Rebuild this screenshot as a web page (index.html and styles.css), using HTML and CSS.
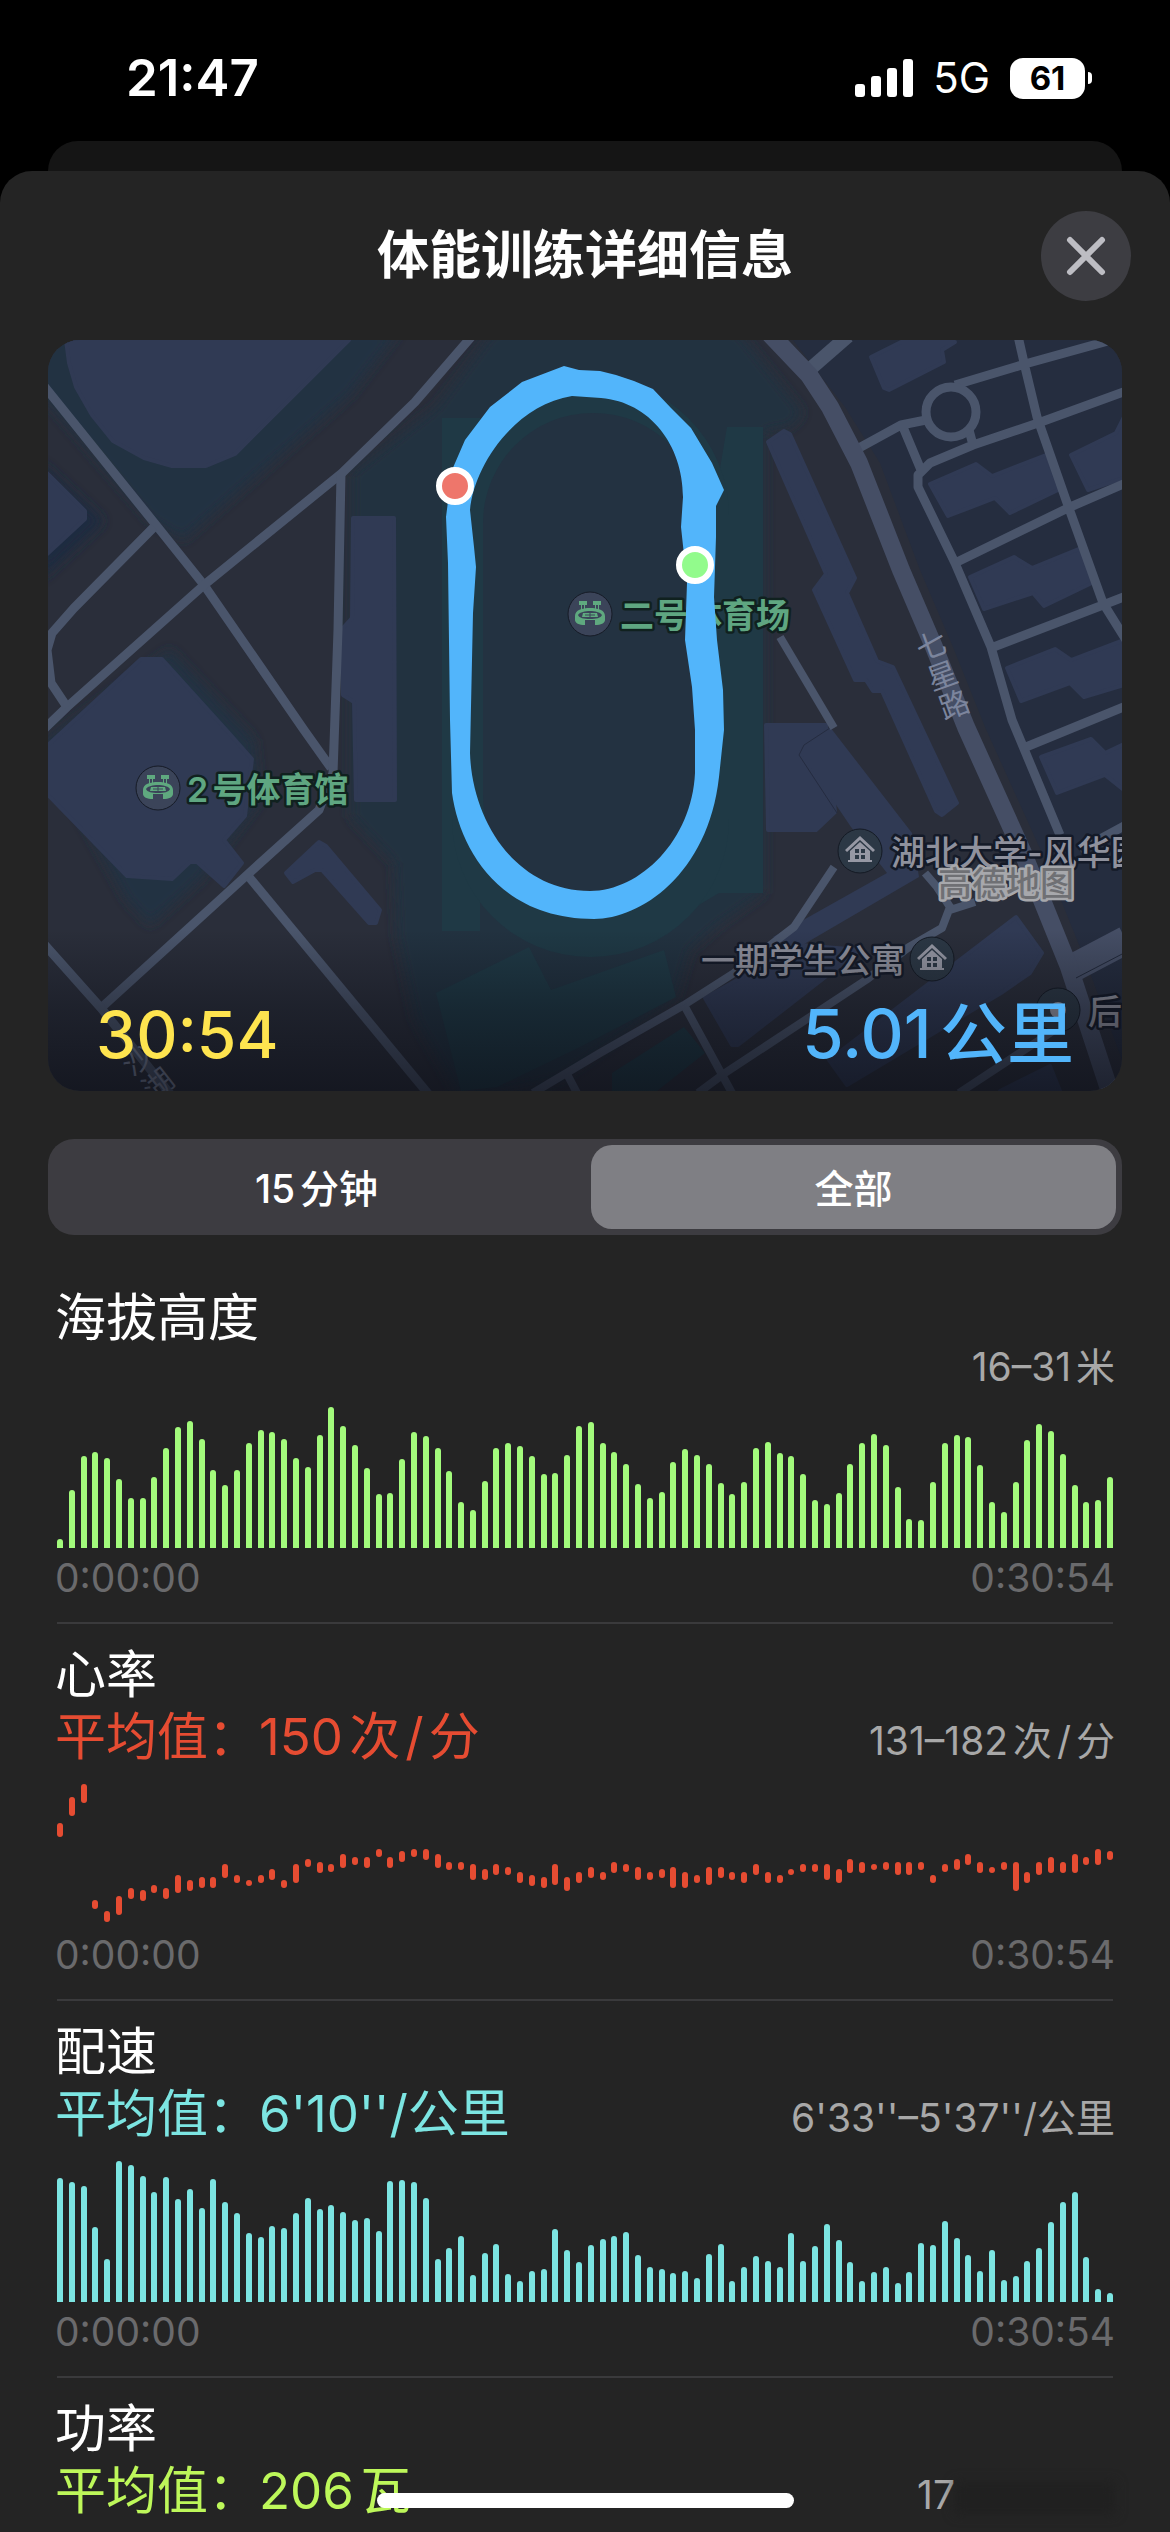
FILE: index.html
```html
<!DOCTYPE html>
<html lang="zh-CN">
<head>
<meta charset="utf-8">
<meta name="viewport" content="width=device-width, initial-scale=1">
<title>体能训练详细信息</title>
<link rel="stylesheet" href="styles.css">
</head>
<body>
<header class="status">
  <time class="status-time">21:47</time>
  <div class="status-right">
    <svg class="signal" viewBox="0 0 58 38" aria-hidden="true">
      <rect x="0" y="25" width="10" height="13" rx="3"/>
      <rect x="16" y="17" width="10" height="21" rx="3"/>
      <rect x="32" y="9" width="10" height="29" rx="3"/>
      <rect x="48" y="0" width="10" height="38" rx="3"/>
    </svg>
    <span class="network">5G</span>
    <span class="battery"><span class="battery-body">61</span><span class="battery-tip"></span></span>
  </div>
</header>
<div class="sheet-behind"></div>
<main class="sheet">
  <div class="titlebar">
    <h1 class="title">体能训练详细信息</h1>
    <button class="close" type="button" aria-label="关闭">
      <svg class="close-icon" viewBox="0 0 40 40" aria-hidden="true"><path d="M4 4 36 36M36 4 4 36"/></svg>
    </button>
  </div>

  <section class="map" aria-label="路线地图">
    <svg class="map-canvas" viewBox="48 340 1074 751">
      <defs>
        <linearGradient id="shade" x1="0" y1="0" x2="0" y2="1">
          <stop offset="0" stop-color="#0a0c14" stop-opacity="0"/>
          <stop offset=".5" stop-color="#0a0c14" stop-opacity=".38"/>
          <stop offset="1" stop-color="#0a0c14" stop-opacity=".66"/>
        </linearGradient>
        <filter id="soft" x="-10%" y="-10%" width="120%" height="120%"><feGaussianBlur stdDeviation="6"/></filter>
        <g id="stadium">
          <circle r="22" fill="#3b4459" stroke="#161b26" stroke-width="1"/>
          <g fill="#5fa97f">
            <path d="M-11-13h8v4h-8zM3-13h8v4H3zM-9-9h1v5h-1zM-6-9h1v5h-1zM5-9h1v5H5zM8-9h1v5H8z"/>
            <path fill-rule="evenodd" d="M-15 2C-15-4-8-6 0-6s15 2 15 8v4c0 3-4 5-10 5V6h-10v5c-6 0-10-2-10-5zM-12 1C-11 4-6 5 0 5s11-1 12-4C10-2 5-3 0-3s-10 1-12 4z"/>
            <path d="M-7-1h14l1 4H-8z"/>
          </g>
          <path d="M-5 1H5M0-1v4" stroke="#3b4459" stroke-width="1"/>
        </g>
        <g id="house">
          <circle r="22" fill="#2c3845" stroke="#141a24" stroke-width="1"/>
          <g fill="#9698a4">
            <path d="M0-15 15-1l-2 2L0-11-13 1l-2-2z"/>
            <path fill-rule="evenodd" d="M0-9 10 0v9h2v2h-24V9h2V0zM-5-2v4h4v-4zM1-2v4h4v-4zM-5 4v4h4V4zM1 4v4h4V4z"/>
          </g>
        </g>
      </defs>

      <rect x="48" y="340" width="1074" height="751" fill="#2a2e3a"/>
      <g filter="url(#soft)" fill="#233342">
        <path d="M30 330H400L350 395 183 540 150 520 40 392Z"/>
        <path d="M40 745 127 900 150 925 200 880 260 800 254 740 170 650Z"/>
        <path fill="#1f2c41" d="M40 462 104 521 40 580Z"/>
      </g>
      <path filter="url(#soft)" fill="#233241" d="M494 330H737L803 413 790 427 764 432V893L719 925 690 950 676 997 560 1080 461 1100 415 1020 397 937 394 863 351 817V473L436 407Z"/>
      <path fill="#252d3f" d="M793 340 820 375 845 407 880 463 920 570 953 647 985 727 1042 853 1088 967 1122 1060V340Z"/>

      <g fill="#1f3945">
        <path d="M442 418H480V931H442ZM727 427H763V893H719L640 940Z"/>
        <rect x="452" y="378" width="277" height="579" rx="138"/>
        <path d="M436 993 529 947 551 990 664 950 676 997 580 1047 497 1087 461 1091ZM612 1073 684 1027 705 1053 657 1091H612Z"/>
      </g>
      <rect x="483" y="413" width="220" height="492" rx="110" fill="#233241"/>

      <g fill="#303a54" stroke="#303a54" stroke-width="4" stroke-linejoin="round">
        <path d="M66 340 69 363 76 387 92 415 113 441 144 458 172 466H206L235 454 349 340Z"/>
        <path d="M46 472 85 511V519L46 555Z"/>
        <path d="M353 518H394L395 800H356L354 702 343 695V628L352 618Z"/>
        <path d="M141 659H162L229 733 252 759 245 816 224 840 242 863 224 886 197 862H190L172 879 127 876 48 795V745Z"/>
        <path d="M286 873 319 842 326 846 380 910 376 923 369 923 322 870 315 870 293 882Z"/>
        <path d="M871 357 901 342H955L942 350 944 362 889 390 884 388Z"/>
        <path d="M768 442 784 431 790 434 855 578 847 593 877 661 893 667 957 803 942 815 936 811 882 691 873 691 866 680 855 680 814 590 826 574Z"/>
        <path d="M930 484 976 464 992 476 1046 455 1060 489 1010 513 995 498 948 516Z"/>
        <path d="M970 577 1014 557 1032 568 1081 548 1096 581 1044 606 1033 593 984 609Z"/>
        <path d="M1007 668 1055 649 1071 660 1124 640V685L1084 697 1070 683 1021 701Z"/>
        <path d="M1071 455 1116 433 1124 417V478L1088 490Z"/>
        <path d="M1041 757 1091 739 1105 753 1124 744V790L1105 775 1057 793Z"/>
        <path d="M766 725H826L835 812 816 830H768Z"/>
        <path d="M1016 917 1042 953 1030 973 1001 993 847 1085 829 1060Z"/>
        <path d="M705 998 800 945 860 950 738 1045 732 1045Z"/>
        <path d="M1000 1091 1050 1066 1060 1091Z"/>
      </g>
      <path d="M799 750 830 727 912 833 919 877 794 950 773 937 887 873 851 827Z" fill="#303a54"/>
      <path d="M837 813 799 755 804 745 830 728" fill="none" stroke="#252c40" stroke-width="1"/>

      <g fill="none" stroke="#4a556b" stroke-width="9" stroke-linejoin="round">
        <path d="M40 381 156 525 204 585 304 730 331 768"/>
        <path d="M472 336 415 402 342 473 204 585 67 707 40 733"/>
        <path d="M341 473 338 630 333 773 319 810 247 875 101 1008"/>
        <path d="M44 944 101 1008 175 1100"/>
        <path d="M249 877 430 1096"/>
        <path d="M154 527 74 608 52 633 47 650 51 683 67 707"/>
        <path d="M533 1093 600 1053 684 1005 734 973 794 927 834 867" stroke-width="8"/>
        <path d="M567 1074 577 1093M684 1005 732 1093M698 1093 725 1073 866 980 909 947 942 928 950 907 937 887 925 873M959 1093 1044 1037 1069 1020M950 910 975 902" stroke-width="8"/>
        <path d="M780 637 834 728" stroke-width="8"/>
        <path d="M1018 336 1025 367 1037 417 1066 500 1103 603 1126 640M1126 336 1025 364 955 385M926 420 901 425 859 448M903 427 921 470M1126 391 1041 422 973 445 930 463 918 475 918 487 955 563 991 647 1012 720 1060 835M969 430 973 445M1126 483 1068 508 955 563M1126 596 1103 605 991 648M1126 706 1026 747M1126 825 1080 850"/>
        <circle cx="951" cy="412" r="25"/>
        <path d="M848 336 809 370" stroke-width="14"/>
        <path d="M1069 970 1126 940" stroke-width="28" stroke="#454e65"/>
        <path d="M770 334 809 375 830 407 859 463 901 570 934 647 966 727 1023 853 1069 967 1111 1095" stroke-width="18" stroke="#454e65"/>
        <path d="M1076 978 1126 952" stroke-width="1" stroke="#222a3b"/>
      </g>

      <g class="road-name">
        <text x="0" y="0" transform="translate(921 661) rotate(-20)">七</text>
        <text x="0" y="0" transform="translate(932 691) rotate(-20)">星</text>
        <text x="0" y="0" transform="translate(944 720) rotate(-20)">路</text>
        <text x="0" y="0" transform="translate(132 1077) rotate(-38)">沙</text>
        <text x="0" y="0" transform="translate(153 1102) rotate(-38)">湖</text>
      </g>
      <use href="#stadium" x="590" y="614"/>
      <use href="#stadium" x="158" y="788"/>
      <g class="place venue">
        <text x="620" y="628">二号体育场</text>
        <text x="187" y="802">2号体育馆</text>
      </g>
      <use href="#house" x="860" y="851"/>
      <use href="#house" x="932" y="959"/>
      <circle cx="1058" cy="1010" r="22" fill="#2c3845" stroke="#141a24"/>
      <circle cx="1058" cy="1010" r="8" fill="#9698a4"/>
      <g class="place campus">
        <text x="891" y="865">湖北大学-风华园</text>
        <text x="701" y="973">一期学生公寓</text>
        <text x="1088" y="1024">后</text>
      </g>
      <text class="provider" x="938" y="896">高德地图</text>

      <rect x="48" y="930" width="1074" height="161" fill="url(#shade)"/>

      <path fill="#52b5fb" fill-rule="evenodd" d="M564 366 579 370 600 371 616 375 634 381 653 389 671 408 691 428 712 463 724 490 716 506 716 537 714 597 717 640 723 690 724 730 719 777C708 875 640 919 594 919C500 919 460 850 452 793L450 720 448 563 446 517 452 470 465 440 490 407 522 382ZM572 396 601 398C650 402 683 445 683 497L681 527 687 583 685 640 692 687 695 730V773C692 840 640 891 590 891C515 891 472 820 470 753L473 613 476 567 474 547 470 510C474 465 515 405 572 396Z"/>
      <g stroke="#fff" stroke-width="6">
        <circle cx="455" cy="486" r="16" fill="#ee766b"/>
        <circle cx="695" cy="565" r="16" fill="#92fb8c"/>
      </g>
    </svg>
    <div class="map-stats">
      <span class="duration">30:54</span>
      <span class="distance">5.01公里</span>
    </div>
  </section>

  <div class="segments" role="group" aria-label="时间范围">
    <button class="segment" type="button" aria-pressed="false">15分钟</button>
    <button class="segment selected" type="button" aria-pressed="true">全部</button>
  </div>

  <section class="metric altitude">
    <h2 class="metric-name">海拔高度</h2>
    <div class="summary"><span class="range">16–31米</span></div>
    <div class="chart" data-series="altitude" role="img" aria-label="海拔高度图表"></div>
    <div class="axis"><span>0:00:00</span><span>0:30:54</span></div>
  </section>
  <section class="metric heart">
    <h2 class="metric-name">心率</h2>
    <div class="summary"><span class="average">平均值：150次<span class="per">/</span>分</span><span class="range">131–182次<span class="per">/</span>分</span></div>
    <div class="chart floating" data-series="heart" role="img" aria-label="心率图表"></div>
    <div class="axis"><span>0:00:00</span><span>0:30:54</span></div>
  </section>
  <section class="metric pace">
    <h2 class="metric-name">配速</h2>
    <div class="summary"><span class="average">平均值：6'10''/公里</span><span class="range">6'33''–5'37''/公里</span></div>
    <div class="chart" data-series="pace" role="img" aria-label="配速图表"></div>
    <div class="axis"><span>0:00:00</span><span>0:30:54</span></div>
  </section>
  <section class="metric power">
    <h2 class="metric-name">功率</h2>
    <div class="summary"><span class="average">平均值：206瓦</span><span class="range">17<span class="smudge"></span></span></div>
  </section>
</main>
<div class="home-indicator"></div>
<script src="charts.js"></script>
</body>
</html>
```

FILE: styles.css
```css
* {
  box-sizing: border-box;
}

body {
  margin: 0;
  min-height: 100vh;
  display: flex;
  flex-direction: column;
  background: #000;
  color: #fff;
  font-family: Inter, "Noto Sans CJK SC", sans-serif;
  text-autospace: normal;
}

button {
  border: 0;
  padding: 0;
  color: inherit;
  font: inherit;
  text-autospace: normal;
}

/* Status bar */
.status {
  height: 141px;
  padding: 14px 78px 0 126px;
  display: flex;
  align-items: flex-start;
  justify-content: space-between;
}

.status-time {
  font-size: 51px;
  font-weight: 600;
  line-height: 128px;
}

.status-right {
  height: 128px;
  display: flex;
  align-items: center;
  gap: 20px;
}

.signal {
  width: 58px;
  height: 38px;
  fill: #fff;
}

.network {
  font-size: 42px;
  line-height: 44px;
  font-weight: 400;
}

.battery {
  display: flex;
  align-items: center;
  gap: 3px;
}

.battery-body {
  width: 75px;
  height: 41px;
  border-radius: 13px;
  background: #fff;
  color: #000;
  font-size: 33px;
  font-weight: 700;
  line-height: 41px;
  text-align: center;
}

.battery-tip {
  width: 4px;
  height: 12px;
  border-radius: 0 4px 4px 0;
  background: #fff;
}

/* Sheets */
.sheet-behind {
  height: 60px;
  margin: 0 48px -30px;
  border-radius: 30px 30px 0 0;
  background: #151515;
}

.sheet {
  flex: 1;
  padding: 0 48px;
  border-radius: 32px 32px 0 0;
  background: #242424;
  position: relative;
}

.titlebar {
  height: 169px;
  margin-right: -9px;
  display: grid;
  grid-template-columns: 90px 1fr 90px;
  align-items: center;
}

.title {
  grid-column: 2;
  margin: 0;
  padding-right: 9px;
  font-size: 52px;
  font-weight: 600;
  line-height: 61px;
  text-align: center;
}

.close {
  width: 90px;
  height: 90px;
  border-radius: 50%;
  background: #3d3d42;
  display: grid;
  place-items: center;
}

.close-icon {
  width: 40px;
  height: 40px;
  fill: none;
  stroke: #bdbdc3;
  stroke-width: 6;
  stroke-linecap: round;
}

/* Map card */
.map {
  display: grid;
  border-radius: 32px;
  overflow: hidden;
}

.map-canvas,
.map-stats {
  grid-area: 1 / 1;
}

.map-canvas {
  display: block;
  width: 100%;
}

.map-stats {
  align-self: end;
  padding: 0 48px 16px;
  display: flex;
  justify-content: space-between;
  align-items: baseline;
  font-weight: 500;
  line-height: 80px;
}

.duration {
  color: #fee44f;
  font-size: 64px;
}

.distance {
  color: #52b5fb;
  font-size: 67px;
}

.place,
.provider {
  font-size: 34px;
  font-weight: 500;
  stroke-width: 5px;
  stroke-linejoin: round;
  paint-order: stroke;
}

.venue {
  font-weight: 600;
  fill: #5fa681;
  stroke: #10211f;
}

.campus {
  fill: #8f919d;
  stroke: #141a28;
}

.provider {
  fill: #6f7074;
  stroke: #a7a8ac;
}

.road-name {
  font-size: 30px;
  fill: #7c859d;
}

/* Segmented control */
.segments {
  margin-top: 48px;
  padding: 6px;
  display: grid;
  grid-template-columns: 1fr 1fr;
  gap: 12px;
  border-radius: 26px;
  background: #3d3c41;
}

.segment {
  height: 84px;
  padding-bottom: 3px;
  border-radius: 21px;
  background: none;
  font-size: 39px;
  font-weight: 500;
}

.segment.selected {
  background: #7f7f84;
}

/* Metrics */
.metric {
  margin: 0 9px;
  padding: 20px 0 21px;
  border-bottom: 2px solid #3a3a3c;
}

.segments + .metric {
  margin-top: 32px;
}

.metric:last-child {
  padding-bottom: 0;
  border-bottom: 0;
}

.metric-name,
.average {
  margin: 0 0 0 -2px;
  font-size: 51px;
  font-weight: 400;
}

.metric-name {
  line-height: 61px;
}

.summary {
  height: 61px;
  display: flex;
  justify-content: space-between;
  align-items: baseline;
  line-height: 63px;
}

.range {
  margin-left: auto;
  margin-right: -2px;
  color: #a8a8a8;
  font-size: 39px;
}

.per {
  margin: 0 5px;
}

.altitude .summary {
  height: 41px;
  line-height: 37px;
}

.altitude {
  --series: #a3fb7c;
}

.heart {
  --series: #e64c32;
}

.pace {
  --series: #7ce5e2;
}

.power {
  --series: #bdf75a;
}

.average {
  color: var(--series);
}

.chart {
  height: 141px;
  margin-top: 18px;
  display: flex;
  justify-content: space-between;
  align-items: flex-end;
}

.chart.floating {
  align-items: flex-start;
}

.bar {
  width: 6px;
  border-radius: 3px 3px 0 0;
  background: var(--series);
}

.floating .bar {
  border-radius: 3px;
}

.axis {
  margin: 6px -2px 0;
  display: flex;
  justify-content: space-between;
  color: #6a6a6c;
  font-size: 39px;
  line-height: 47px;
}

.smudge {
  display: inline-block;
  width: 160px;
  height: 32px;
  background: #202020;
  filter: blur(6px);
  vertical-align: middle;
}

.home-indicator {
  position: fixed;
  left: 50%;
  bottom: 24px;
  width: 417px;
  height: 15px;
  margin-left: -208px;
  border-radius: 8px;
  background: #fff;
}
```

FILE: charts.js
```js
// Column series hold one height per sample.
const columns = {
  altitude: [9,58,92,96,90,69,50,50,71,100,121,127,109,78,63,78,105,118,116,109,90,81,113,141,122,103,80,54,55,89,116,112,100,77,46,38,67,100,105,102,92,74,75,93,122,126,105,96,84,64,50,56,86,99,93,84,65,54,66,100,106,95,92,74,48,44,55,84,105,114,103,61,29,28,66,105,113,111,83,46,36,66,108,124,117,94,63,46,48,71],
  pace: [124,120,116,75,43,141,137,126,110,125,103,113,94,123,100,89,69,65,76,74,89,104,93,97,90,82,84,71,121,122,120,104,43,54,66,27,49,58,28,21,31,33,73,52,40,57,63,66,70,47,35,33,29,31,24,48,58,21,35,46,41,35,69,41,56,78,62,40,21,30,35,19,30,59,57,81,64,47,31,52,22,26,41,54,80,100,110,45,13,9]
};

// Heart rate samples are [distance from top, length].
const heart = [[39,14],[13,19],[0,19],[116,9],[127,11],[112,19],[104,11],[106,11],[101,8],[104,11],[91,18],[96,11],[93,11],[93,11],[80,14],[91,8],[96,6],[91,8],[85,11],[96,8],[80,19],[75,8],[78,11],[80,8],[70,14],[73,8],[73,11],[65,8],[73,11],[67,11],[65,8],[65,11],[70,14],[78,8],[78,8],[80,16],[85,11],[80,11],[83,8],[88,11],[91,11],[93,11],[80,21],[93,14],[88,11],[83,11],[88,8],[78,11],[80,8],[83,13],[88,8],[85,9],[83,21],[88,16],[91,8],[83,18],[83,11],[88,8],[88,11],[80,11],[88,11],[91,8],[85,6],[80,8],[80,8],[80,16],[85,14],[75,14],[78,11],[80,6],[78,8],[78,13],[78,13],[78,8],[91,8],[80,8],[75,11],[70,11],[78,11],[83,6],[78,8],[78,29],[88,11],[78,13],[73,16],[78,11],[70,19],[73,8],[65,16],[67,9]];

document.querySelectorAll(".chart").forEach((chart) => {
  const name = chart.dataset.series;
  const samples = name === "heart" ? heart : columns[name].map((height) => [0, height]);
  samples.forEach(([top, length]) => {
    const bar = document.createElement("span");
    bar.className = "bar";
    bar.style.height = length + "px";
    if (top) bar.style.marginTop = top + "px";
    chart.append(bar);
  });
});
```
